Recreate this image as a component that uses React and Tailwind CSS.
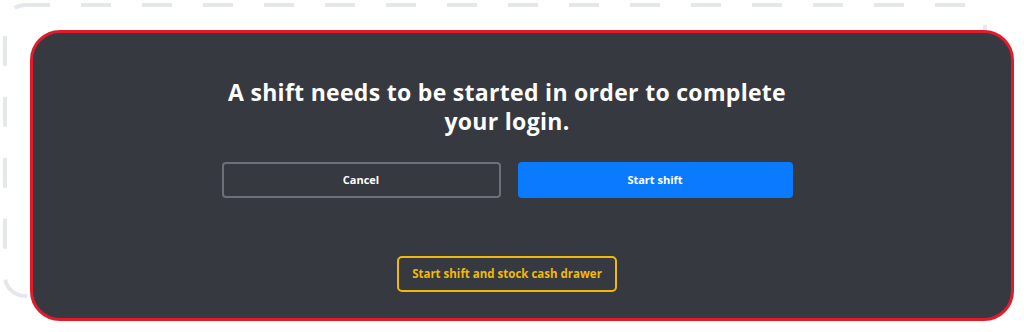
import React from 'react';

const App = () => {
  return (
    <div
      className="relative w-[1024px] h-[332px] bg-white overflow-hidden"
      style={{ fontFamily: '"Open Sans", "Noto Sans", sans-serif' }}
    >
      {/* dashed drop area behind the dialog */}
      <svg className="absolute left-0 top-0" width="1024" height="332">
        <rect
          x="5"
          y="5"
          width="980"
          height="291"
          rx="20"
          fill="none"
          stroke="#e4e7ec"
          strokeWidth="4"
          strokeDasharray="30 31"
          strokeDashoffset="5"
        />
      </svg>

      <div className="relative ml-[30px] mt-[30px] w-[984px] h-[291px] rounded-[30px] border-[3px] border-[#e21b2c] bg-[#363940] flex justify-center pr-[30px]">
        <div className="flex flex-col items-center pt-[45px] w-[571px]">
          <h1 className="text-white font-bold text-[23px] leading-[29px] tracking-[0.3px] text-center w-[590px]">
            A shift needs to be started in order to complete your login.
          </h1>

          <div className="flex gap-[17px] mt-[26px] w-full">
            <button className="flex-1 h-[36px] rounded-[4px] border-2 border-[#6b7079] text-white text-[11px] font-bold">
              Cancel
            </button>
            <button className="flex-1 h-[36px] rounded-[4px] bg-[#0a7bff] text-white text-[11px] font-bold">
              Start shift
            </button>
          </div>

          <button className="mt-[58px] h-[36px] px-[13px] rounded-[5px] border-2 border-[#f0b90b] text-[#f0b90b] text-[11.5px] font-bold">
            Start shift and stock cash drawer
          </button>
        </div>
      </div>
    </div>
  );
};

export default App;
